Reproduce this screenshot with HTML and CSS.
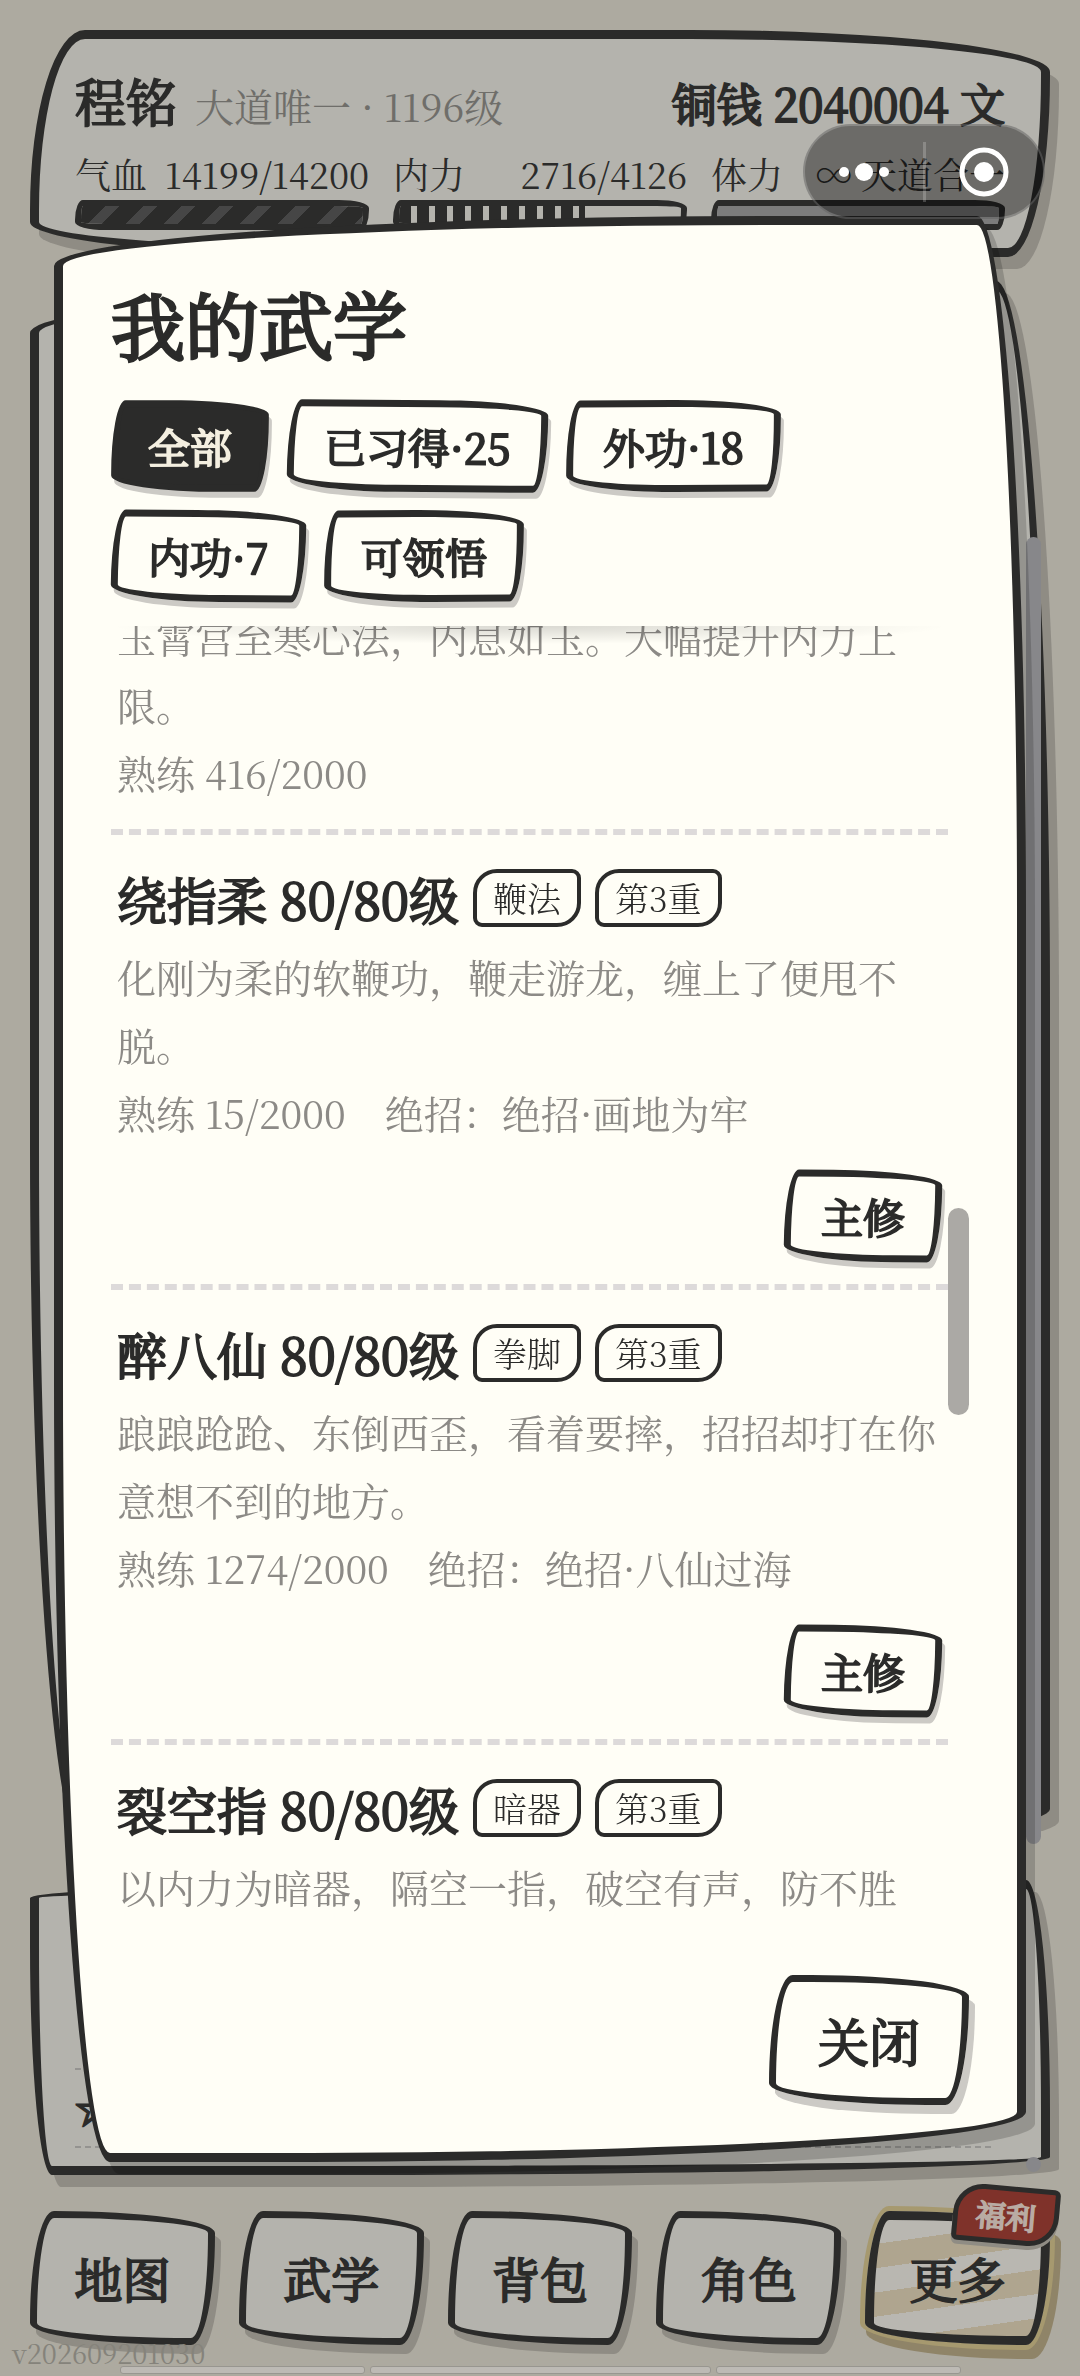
FILE: index.html
```
<!DOCTYPE html>
<html lang="zh-CN">
<head>
    <meta charset="UTF-8">
    <meta name="viewport" content="width=device-width, initial-scale=1">
    <title>我的武学</title>
    <link rel="stylesheet" href="styles.css">
</head>
<body>
<div class="app">
    <header class="panel status">
        <div class="status-top">
            <strong class="name">程铭</strong>
            <span class="rank">大道唯一 · 1196级</span>
            <strong class="money">铜钱 2040004 文</strong>
        </div>
        <div class="stats">
            <div class="stat">
                <p><span>气血</span><span>14199/14200</span></p>
                <div class="bar"><div class="fill fill-hp"></div></div>
            </div>
            <div class="stat">
                <p><span>内力</span><span>2716/4126</span></p>
                <div class="bar"><div class="fill fill-mp" style="width:66%"></div></div>
            </div>
            <div class="stat">
                <p><span>体力</span><span>∞ 天道合一</span></p>
                <div class="bar"><div class="fill fill-sp"></div></div>
            </div>
        </div>
    </header>
    <main class="panel scene"><i class="scroll"></i></main>
    <section class="panel log">
        <p>☆</p>
        <i class="scroll"></i>
    </section>
    <nav class="nav">
        <button class="btn">地图</button>
        <button class="btn">武学</button>
        <button class="btn">背包</button>
        <button class="btn">角色</button>
        <button class="btn more">更多<span class="badge">福利</span></button>
    </nav>
    <footer class="foot">
        <span class="version">v202609201030</span>
        <div class="segs"><i></i><i></i><i></i></div>
    </footer>
</div>

<div class="mask">
    <div class="modal">
        <h2>我的武学</h2>
        <div class="tabs">
            <button class="btn small active">全部</button>
            <button class="btn small">已习得·25</button>
            <button class="btn small">外功·18</button>
            <button class="btn small">内功·7</button>
            <button class="btn small">可领悟</button>
        </div>
        <div class="list-wrap">
            <ul class="list">
                <li>
                    <p>玉霄宫至寒心法，内息如玉。大幅提升内力上限。</p>
                    <p>熟练 416/2000</p>
                </li>
                <li>
                    <h3>绕指柔 80/80级<span class="tag">鞭法</span><span class="tag">第3重</span></h3>
                    <p>化刚为柔的软鞭功，鞭走游龙，缠上了便甩不脱。</p>
                    <p>熟练 15/2000　绝招：绝招·画地为牢</p>
                    <button class="btn small">主修</button>
                </li>
                <li>
                    <h3>醉八仙 80/80级<span class="tag">拳脚</span><span class="tag">第3重</span></h3>
                    <p>踉踉跄跄、东倒西歪，看着要摔，招招却打在你意想不到的地方。</p>
                    <p>熟练 1274/2000　绝招：绝招·八仙过海</p>
                    <button class="btn small">主修</button>
                </li>
                <li>
                    <h3>裂空指 80/80级<span class="tag">暗器</span><span class="tag">第3重</span></h3>
                    <p>以内力为暗器，隔空一指，破空有声，防不胜</p>
                </li>
            </ul>
            <i class="thumb"></i>
        </div>
        <button class="btn close">关闭</button>
    </div>
</div>

<div class="capsule">
    <button aria-label="菜单">
        <svg width="52" height="20" viewBox="0 0 52 20"><circle cx="6" cy="10" r="5"/><circle cx="26" cy="10" r="9"/><circle cx="46" cy="10" r="5"/></svg>
    </button>
    <button aria-label="退出">
        <svg width="52" height="52" viewBox="0 0 52 52"><circle class="ring" cx="26" cy="26" r="22"/><circle cx="26" cy="26" r="10"/></svg>
    </button>
</div>
</body>
</html>
```
FILE: styles.css
```
*{margin: 0;padding: 0;box-sizing: border-box;}
body{
    background: #adaaa0;
    color: #2b2b2a;
    font-family: "Noto Serif CJK SC", "Noto Sans CJK SC", serif;
    font-weight: 400;
    font-size: 39px;
}
li{list-style: none;}
button{font-family: inherit;color: inherit;background: none;border: none;cursor: pointer;}

.app{position: relative;min-height: 100vh;padding: 30px 30px 31px;display: flex;flex-direction: column;gap: 24px;overflow: hidden;}
.panel{
    position: relative;
    background: #b4b3ad;
    border: 9px solid #2b2b2a;
    box-shadow: 9px 12px 0 #8f8c84;
}

/*角色状态*/
.status{padding: 24px 36px 18px;border-radius: 55px 360px 42px 360px / 180px 42px 180px 35px;}
.status-top{display: flex;align-items: baseline;height: 74px;margin-bottom: 15px;line-height: 74px;}
.name,.money,.btn,.modal h2,.list h3{font-weight: 400;-webkit-text-stroke: 2px;}
.name{font-size: 51px;margin-right: 18px;}
.rank{color: #6f6e6a;}
.money{font-size: 45px;margin-left: auto;}
.stats{display: grid;grid-template-columns: repeat(3, 1fr);gap: 24px;}
.stat p{display: flex;justify-content: space-between;font-size: 36px;line-height: 44px;margin-bottom: 4px;white-space: nowrap;}
.bar{height: 30px;border: 6px solid #2b2b2a;border-radius: 8px 30px 8px 30px / 20px 8px 20px 8px;overflow: hidden;}
.fill{height: 100%;}
.fill-hp{background: repeating-linear-gradient(135deg, #2b2b2a 0 17px, #464646 17px 27px);}
.fill-mp{background: repeating-linear-gradient(90deg, #2b2b2a 0 12px, #b4b3ad 12px 18px);}
.fill-sp{background: #7c7c7c;}

.scene{flex: 1;border-radius: 750px 54px 750px 56px / 52px 720px 47px 709px;}
.log{height: 295px;padding: 179px 50px 20px 36px;border-radius: 750px 24px 750px 22px / 18px 230px 18px 230px;}
.log p{height: 80px;line-height: 72px;border: 2px dashed #949390;border-width: 2px 0;-webkit-text-stroke: 2px;}
.scroll{position: absolute;right: 0;top: 247px;bottom: 3px;width: 15px;border-radius: 8px;background: #87878a;}
.log .scroll{top: auto;bottom: -6px;height: 15px;}

/*手绘按钮*/
.btn{
    position: relative;
    border: 7px solid #2b2b2a;
    border-radius: 24px 160px 24px 160px / 110px 22px 110px 22px;
    font-size: 48px;
    line-height: 60px;
    white-space: nowrap;
}
.nav{display: grid;grid-template-columns: repeat(5, 1fr);gap: 24px;margin-top: 12px;}
.nav .btn{height: 134px;background: #b4b3ad;box-shadow: 6px 9px 0 #8f8c84;}
.nav .more{
    border-width: 9px;
    background: repeating-linear-gradient(172deg, #b9b7b1 0 24px, #afa58f 24px 48px);
    box-shadow: 0 0 0 5px #a6996f, 6px 9px 0 5px #8f8468;
}
.badge{
    position: absolute;
    top: -34px;
    right: -18px;
    width: 106px;
    background: #7f322a;
    color: #b9aba3;
    border: 5px solid #2b2b2a;
    border-radius: 30px 6px 30px 6px;
    font-size: 30px;
    line-height: 48px;
    transform: rotate(5deg);
    box-shadow: 0 4px 0 #8f8c84;
    -webkit-text-stroke: 2px;
}
.foot{position: absolute;left: 0;right: 0;bottom: 0;height: 40px;padding: 0 12px;}
.version{font-size: 27px;line-height: 34px;color: #85837b;display: block;}
.segs{position: absolute;left: 120px;right: 119px;bottom: 2px;display: flex;gap: 5px;}
.segs i{flex: 1;height: 8px;border: 1px solid #989690;background: #bdbab5;border-radius: 3px;}
.segs i:nth-child(2){flex: 1.4;}

/*弹窗*/
.mask{position: fixed;inset: 0;padding: 216px 54px 214px;}
.modal{
    height: 100%;
    padding: 48px;
    display: flex;
    flex-direction: column;
    background: #fffef6;
    border: 9px solid #2b2b2a;
    border-radius: 720px 49px 750px 56px / 50px 690px 50px 780px;
    box-shadow: 9px 12px 0 rgba(0,0,0,.17);
}
.modal h2{font-size: 74px;line-height: 103px;margin-bottom: 24px;transform: rotate(-.5deg);transform-origin: 0 50%;-webkit-text-stroke: 3px;}
.tabs{display: flex;flex-wrap: wrap;gap: 18px;margin-bottom: 24px;}
.small{
    height: 92px;
    padding: 0 30px;
    font-size: 42px;
    border-radius: 15px 110px 15px 110px / 76px 15px 76px 17px;
    box-shadow: 3px 6px 0 #cccac5;
    transform: rotate(-.3deg);
}
.small:nth-child(even){transform: rotate(.4deg);}
.active{background: #2b2b2a;color: #f4efe0;}
.list-wrap{position: relative;flex: 1;min-height: 0;overflow: hidden;padding-right: 21px;}
.list-wrap:before{
    content: "";
    position: absolute;
    top: 0;
    left: 0;
    right: 21px;
    height: 18px;
    background: radial-gradient(farthest-side at 50% 0, rgba(0,0,0,.15), rgba(0,0,0,0));
}
.list li{display: flex;flex-direction: column;padding: 34px 6px 22px;border-bottom: 6px dashed #dddada;color: #8c8a86;}
.list li:first-child{margin-top: -24px;padding: 0 6px 23px;}
.list h3{display: flex;align-items: center;height: 58px;margin-bottom: 15px;font-size: 50px;color: #2b2b2a;}
.list p{line-height: 68px;}
.list .btn{align-self: flex-end;margin-top: 24px;color: #2b2b2a;transform: rotate(.4deg);}
.tag{
    margin-left: 14px;
    padding: 0 16px;
    border: 4px solid #2b2b2a;
    border-radius: 24px 9px 24px 9px;
    font-size: 34px;
    font-weight: 300;
    line-height: 50px;
    -webkit-text-stroke: 0;
}
.thumb{position: absolute;right: 0;top: 582px;width: 21px;height: 207px;border-radius: 11px;background: #aba9a5;}
.close{align-self: flex-end;height: 130px;padding: 0 42px;margin-top: 52px;font-size: 51px;box-shadow: 6px 9px 0 #cccac5;}

/*小程序胶囊*/
.capsule{
    position: fixed;
    top: 124px;
    right: 35px;
    width: 242px;
    height: 95px;
    display: flex;
    background: rgba(0,0,0,.4);
    border: 2px solid rgba(255,255,255,.2);
    border-radius: 48px;
    align-items: center;
}
.capsule button{flex: 1;height: 60px;display: flex;align-items: center;justify-content: center;}
.capsule button + button{border-left: 3px solid rgba(255,255,255,.2);}
.capsule svg{fill: #fff;}
.capsule .ring{fill: none;stroke: #fff;stroke-width: 5;}
```
